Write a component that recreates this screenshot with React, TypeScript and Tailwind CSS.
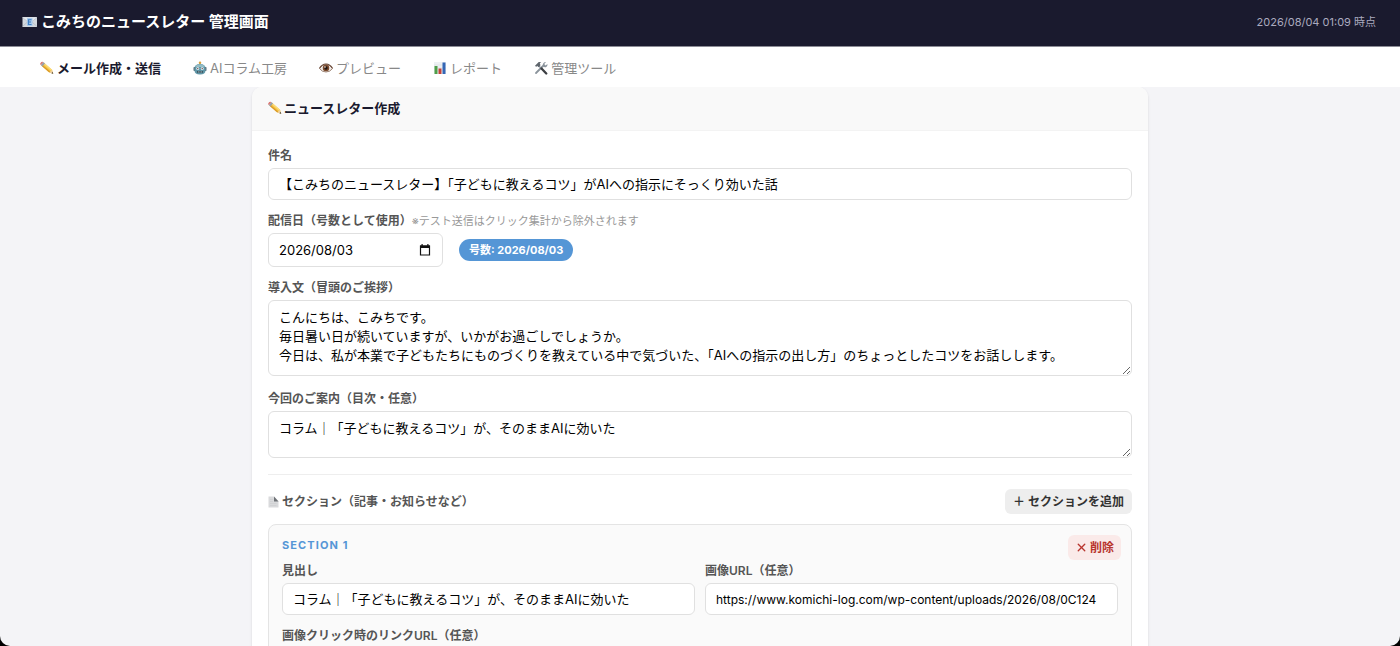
import React, { useState } from 'react';
import { X } from 'lucide-react';

const ICON = 'inline-block shrink-0';

function MailIcon() {
  return (
    <svg className={ICON} width="16" height="14" viewBox="0 0 32 28" aria-hidden="true">
      <rect x="1" y="4" width="29" height="20" rx="1" fill="#d3d8de" />
      <path d="M1 23 12 13M30 23 19 13" stroke="#a9b2bd" strokeWidth="1.2" />
      <path d="M1 5l14.5 12L30 5" fill="#e4e8ed" stroke="#b3bbc5" strokeWidth="1.2" />
      <rect x="10" y="6" width="11" height="16" rx="1" fill="#a8c9ea" />
      <path d="M19 9.5h-6V19h6M13 14h5" fill="none" stroke="#3f7fc4" strokeWidth="2.4" />
    </svg>
  );
}

function PencilIcon() {
  return (
    <svg className={ICON} width="14" height="14" viewBox="0 0 28 28" aria-hidden="true">
      <path d="M8 3.5 24 17.500l2.500 8-8-2.500L3 9.500z" fill="#f6c544" />
      <path d="M8 3.5 24 17.500l-1.800 2L6.300 5.500z" fill="#fbdc78" />
      <path d="M4.700 7.500 20.300 21.200l-1.800 1.800L3 9.500z" fill="#d99a2b" />
      <path d="M24 17.500l2.500 8-8-2.500z" fill="#edcfa0" />
      <path d="M25.400 22l1.100 3.500-3.500-1.100z" fill="#333" />
      <path d="M6.500 2 10 5.200 4.800 11 1.500 8z" fill="#9aa0a8" />
      <path d="M1 4Q3.500.3 6.500 2L1.500 8Q-.5 6.500 1 4z" fill="#d9706c" />
    </svg>
  );
}

function RobotIcon() {
  return (
    <svg className={ICON} width="14" height="14" viewBox="0 0 28 28" aria-hidden="true">
      <path d="M14 3v6" stroke="#6b7f8a" strokeWidth="2" />
      <circle cx="14" cy="3.5" r="2.5" fill="#d9a13b" />
      <rect x="1" y="12" width="4" height="8" rx="1.5" fill="#5c6f7a" />
      <rect x="23" y="12" width="4" height="8" rx="1.5" fill="#5c6f7a" />
      <path d="M3 15Q3 6 14 6t11 9v4q0 8-11 8T3 19z" fill="#5f95a6" />
      <path d="M4.500 12q1.500-5.500 9.500-5.500t9.500 5.500z" fill="#93bcc5" />
      <circle cx="9.500" cy="15" r="3" fill="#dceef2" />
      <circle cx="18.500" cy="15" r="3" fill="#dceef2" />
      <circle cx="9.500" cy="15" r="1.300" fill="#7a4a48" />
      <circle cx="18.500" cy="15" r="1.300" fill="#7a4a48" />
      <rect x="8" y="20" width="12" height="3.500" rx="1" fill="#38505b" />
      <path d="M11 20v3.500M14 20v3.500M17 20v3.500" stroke="#cfdde1" strokeWidth=".8" />
    </svg>
  );
}

function EyeIcon() {
  return (
    <svg className={ICON} width="14" height="14" viewBox="0 0 28 28" aria-hidden="true">
      <path d="M1 15Q6 7 14 7t13 8q-5 7-13 7T1 15z" fill="#f3eeea" stroke="#7d5c49" strokeWidth="1.5" />
      <path d="M1 14.500Q6 6 14 6t13 8.500" fill="none" stroke="#6b4a3a" strokeWidth="2.4" />
      <circle cx="14" cy="14" r="6.500" fill="#7a4a2c" />
      <circle cx="14" cy="14" r="3.300" fill="#1f1511" />
      <circle cx="12" cy="12" r="1.500" fill="#fff" />
    </svg>
  );
}

function ChartIcon() {
  return (
    <svg className={ICON} width="14" height="14" viewBox="0 0 28 28" aria-hidden="true">
      <rect x="2" y="2" width="24" height="24" fill="#eef1f4" />
      <path d="M2 8h24M2 14h24M2 20h24" stroke="#d3d9df" strokeWidth="1" />
      <rect x="3" y="10" width="6" height="16" fill="#4f9e4a" />
      <rect x="11" y="15" width="6" height="11" fill="#c5423a" />
      <rect x="19" y="3" width="6" height="23" fill="#3567b5" />
    </svg>
  );
}

function ToolsIcon() {
  return (
    <svg className={ICON} width="14" height="14" viewBox="0 0 28 28" aria-hidden="true">
      <path d="M4 24 18 10" stroke="#8b949c" strokeWidth="3.6" strokeLinecap="round" />
      <path d="M18 11q-2-5 2-8 2-1.500 4-1l-3.500 4 2.500 3 4-3q.5 3-2 5.500-3 2.500-7-.5z" fill="#8b949c" />
      <path d="M9 9l7 7.500" stroke="#8b949c" strokeWidth="2.6" />
      <path d="M15 15l9.500 10" stroke="#3c3f43" strokeWidth="4.6" strokeLinecap="round" />
      <path d="M2 9.500 9.500 2q3-.5 5 1l-3 1.500 1.500 4-4 4-3-3-1.500 2.500z" fill="#5d646b" />
    </svg>
  );
}

function PageIcon() {
  return (
    <svg className={ICON} width="12" height="14" viewBox="0 0 24 28" aria-hidden="true">
      <path d="M1 3h11l9 9v13H1z" fill="#d9dadc" />
      <path d="M12 3l9 10h-9z" fill="#6f7276" />
      <path d="M4 9h6M4 13h6M4 17h13M4 21h13" stroke="#c8cacc" strokeWidth="1" />
    </svg>
  );
}

function CalendarIcon() {
  return (
    <svg width="12" height="14" viewBox="0 0 12 14" aria-hidden="true">
      <path d="M1.500 3h9v9h-9z" fill="none" stroke="#111" strokeWidth="1.2" />
      <path d="M1 2.500h10V5H1zM2.500 1h1.200v2H2.500zM8.300 1h1.200v2H8.300z" fill="#111" />
    </svg>
  );
}

const tabs = [
  { id: 'compose', label: 'メール作成・送信', icon: <PencilIcon /> },
  { id: 'ai', label: 'AIコラム工房', icon: <RobotIcon /> },
  { id: 'preview', label: 'プレビュー', icon: <EyeIcon /> },
  { id: 'report', label: 'レポート', icon: <ChartIcon /> },
  { id: 'tools', label: '管理ツール', icon: <ToolsIcon /> },
];

const labelClass = 'block mb-1 text-xs leading-4 font-semibold text-[#555]';
const fieldClass = 'block w-full rounded-md border border-[#e0e0e0] bg-white px-[10px] text-black outline-none focus:border-[#5596d6]';

function App() {
  const [tab, setTab] = useState('compose');
  const [issueDate, setIssueDate] = useState('2026/08/03');

  return (
    <div className="h-screen bg-black font-['Inter','Noto_Sans_CJK_JP',sans-serif]" lang="ja">
      <div className="flex h-full flex-col overflow-hidden rounded-b-[10px] bg-[#f4f4f7]">
        <header className="flex h-[47px] shrink-0 items-center justify-between border-b border-[#8c8c96] bg-[#1a1a2e] pr-6 pl-[22px] pb-[2px]">
          <h1 className="flex items-center gap-[3px] text-[15px] leading-5 font-bold text-white">
            <MailIcon />
            こみちのニュースレター 管理画面
          </h1>
          <span className="text-[11px] leading-4 text-[#aaaabf]">2026/08/04 01:09 時点</span>
        </header>

        <nav className="flex h-10 shrink-0 items-center gap-8 bg-white px-10 pt-[2px]">
          {tabs.map((t) => (
            <button
              key={t.id}
              type="button"
              onClick={() => setTab(t.id)}
              className={`flex items-center gap-[3px] text-[13px] leading-5 ${tab === t.id ? 'font-bold text-[#1a1a2e]' : 'text-[#888]'}`}
            >
              {t.icon}
              {t.label}
            </button>
          ))}
        </nav>

        <main className="flex-1 overflow-y-auto [scrollbar-width:none]">
          <div className="mx-auto max-w-4xl overflow-hidden rounded-[10px] bg-white shadow-sm">
            <div className="flex h-11 items-center border-b border-[#f3f3f3] bg-[#f9f9f9] px-4 pb-[2px]">
              <h2 className="flex items-center gap-[2px] text-[13px] leading-5 font-bold text-[#1a1a2e]">
                <PencilIcon />
                ニュースレター作成
              </h2>
            </div>

            <form className="px-4 pt-[17px] pb-4">
              <div className="mb-[13px]">
                <label htmlFor="subject" className={labelClass}>件名</label>
                <input
                  id="subject"
                  type="text"
                  defaultValue="【こみちのニュースレター】「子どもに教えるコツ」がAIへの指示にそっくり効いた話"
                  className={`${fieldClass} h-8 pb-[2px] text-[13px]`}
                />
              </div>

              <div className="mb-[13px]">
                <label htmlFor="issue-date" className={labelClass}>
                  配信日（号数として使用）
                  <span className="text-[11px] font-normal text-[#999]">※テスト送信はクリック集計から除外されます</span>
                </label>
                <div className="flex items-center gap-4">
                  <div className="relative w-[175px]">
                    <input
                      id="issue-date"
                      type="text"
                      value={issueDate}
                      onChange={(e) => setIssueDate(e.target.value)}
                      className={`${fieldClass} h-[34px] text-[13px]`}
                    />
                    <button type="button" aria-label="カレンダーを開く" className="absolute inset-y-0 right-3 flex items-center">
                      <CalendarIcon />
                    </button>
                  </div>
                  <span className="rounded-full bg-[#5596d6] px-[10px] py-[3px] text-[11px] leading-4 font-bold text-white">
                    号数: {issueDate}
                  </span>
                </div>
              </div>

              <div className="mb-[15px]">
                <label htmlFor="intro" className={labelClass}>導入文（冒頭のご挨拶）</label>
                <textarea
                  id="intro"
                  defaultValue={'こんにちは、こみちです。\n毎日暑い日が続いていますが、いかがお過ごしでしょうか。\n今日は、私が本業で子どもたちにものづくりを教えている中で気づいた、「AIへの指示の出し方」のちょっとしたコツをお話しします。'}
                  className={`${fieldClass} h-[76px] py-[7px] text-[13px] leading-[19px]`}
                />
              </div>

              <div className="mb-4">
                <label htmlFor="toc" className={labelClass}>今回のご案内（目次・任意）</label>
                <textarea
                  id="toc"
                  defaultValue="コラム｜「子どもに教えるコツ」が、そのままAIに効いた"
                  className={`${fieldClass} h-[47px] py-[7px] text-[13px] leading-[19px]`}
                />
              </div>

              <div className="flex items-center justify-between border-t border-[#eee] pt-[14px]">
                <h3 className="flex items-center gap-[2px] text-xs leading-4 font-semibold text-[#555]">
                  <PageIcon />
                  セクション（記事・お知らせなど）
                </h3>
                <button type="button" className="h-[25px] rounded-md bg-[#eee] px-2 text-xs font-semibold text-[#333] hover:bg-[#e4e4e4]">
                  ＋ セクションを追加
                </button>
              </div>

              <section className="mt-[10px] rounded-lg border border-[#e4e4e4] bg-[#fafafa] pt-[10px] pb-4">
                <div className="mb-[3px] flex items-start justify-between pr-[10px] pl-[13px]">
                  <h4 className="text-[11px] leading-5 font-bold tracking-widest text-[#5596d6]">SECTION 1</h4>
                  <button type="button" className="flex h-[25px] items-center gap-[2px] rounded-md bg-[#faeae9] px-[7px] text-xs font-semibold text-[#b8352e] hover:bg-[#f6dcda]">
                    <X size={13} strokeWidth={2.5} aria-hidden="true" />
                    削除
                  </button>
                </div>
                <div className="grid grid-cols-2 gap-x-[10px] gap-y-[13px] px-[13px]">
                  <div>
                    <label htmlFor="heading-1" className={labelClass}>見出し</label>
                    <input
                      id="heading-1"
                      type="text"
                      defaultValue="コラム｜「子どもに教えるコツ」が、そのままAIに効いた"
                      className={`${fieldClass} h-8 pb-[2px] text-[13px]`}
                    />
                  </div>
                  <div>
                    <label htmlFor="image-1" className={labelClass}>画像URL（任意）</label>
                    <input
                      id="image-1"
                      type="text"
                      defaultValue="https://www.komichi-log.com/wp-content/uploads/2026/08/0C124"
                      className={`${fieldClass} h-8 text-xs`}
                    />
                  </div>
                  <div className="col-span-2">
                    <label htmlFor="image-link-1" className={labelClass}>画像クリック時のリンクURL（任意）</label>
                    <input id="image-link-1" type="text" className={`${fieldClass} h-8 text-[13px]`} />
                  </div>
                </div>
              </section>
            </form>
          </div>
        </main>
      </div>
    </div>
  );
}

export default App;
